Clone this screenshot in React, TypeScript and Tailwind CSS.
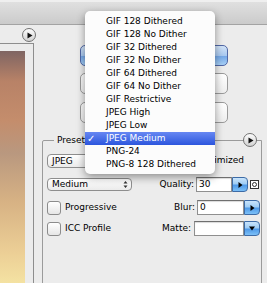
const presets = [
  "GIF 128 Dithered",
  "GIF 128 No Dither",
  "GIF 32 Dithered",
  "GIF 32 No Dither",
  "GIF 64 Dithered",
  "GIF 64 No Dither",
  "GIF Restrictive",
  "JPEG High",
  "JPEG Low",
  "JPEG Medium",
  "PNG-24",
  "PNG-8 128 Dithered",
];

function PlayCircle() {
  return (
    <div className="w-[14px] h-[14px] rounded-full border border-[#727272] bg-gradient-to-b from-[#fdfdfd] to-[#d2d2d2] flex items-center justify-center">
      <svg width="6" height="7" viewBox="0 0 6 7" className="ml-[1px]">
        <path d="M0.5 0.5 L5.5 3.5 L0.5 6.5 Z" fill="#111" />
      </svg>
    </div>
  );
}

function Checkbox() {
  return (
    <div className="w-[14px] h-[14px] rounded-[3px] border border-[#8c8c8c] bg-gradient-to-b from-[#ffffff] to-[#e6e6e6] shrink-0" />
  );
}

function AquaButton({ down }: { down?: boolean }) {
  return (
    <div className="w-[16px] h-[15px] rounded-r-[4px] border border-[#3d6ba6] bg-[linear-gradient(180deg,#c9e4fb_0%,#9fcdf5_45%,#4f9ae8_55%,#7cc0f7_100%)] flex items-center justify-center shrink-0">
      {down ? (
        <svg width="6" height="5" viewBox="0 0 6 5">
          <path d="M0 0.5 L6 0.5 L3 4.5 Z" fill="#000" />
        </svg>
      ) : (
        <svg width="5" height="6" viewBox="0 0 5 6">
          <path d="M0.5 0 L4.5 3 L0.5 6 Z" fill="#000" />
        </svg>
      )}
    </div>
  );
}

function TextField({ value, w }: { value?: string; w: string }) {
  return (
    <div
      className={`${w} h-[15px] bg-white border border-[#8f8f8f] border-t-[#6f6f6f] shadow-[inset_0_1px_1px_rgba(0,0,0,0.15)] pl-[2px] leading-[13px] shrink-0`}
    >
      {value}
    </div>
  );
}

export default function App() {
  return (
    <div className="relative w-[267px] h-[283px] overflow-hidden bg-[#ececec] font-['DejaVu_Sans',sans-serif] text-[9px] text-black">
      <div className="h-[25px] border-t-[2px] border-t-[#efefef] border-b border-b-[#a3a3a3] bg-gradient-to-b from-[#e0e0e0] to-[#cbcbcb]" />

      <div className="flex h-[258px]">
        <div className="w-[42px] shrink-0 flex flex-col">
          <div className="pt-[3px] pl-[22px]">
            <PlayCircle />
          </div>
          <div className="mt-[1px] w-[34px] flex-1 border-t border-r border-[#8e8e8e] pt-[7px] pr-[8px] flex flex-col">
            <div className="flex-1 bg-[linear-gradient(180deg,#7f6563_0%,#b88267_13%,#c48d6c_30%,#b9987f_44%,#d7b284_65%,#eccf96_87%,#f4e2a2_100%)]" />
          </div>
        </div>

        <div className="flex-1 flex flex-col">
          <div className="pt-[20px] pl-[38px] flex flex-col">
            <div className="w-[148px] h-[21px] rounded-[5px] border border-[#5168a6] bg-[linear-gradient(180deg,#d3e4f8_0%,#a9c9f0_50%,#76a9e8_55%,#a7d0f6_100%)]" />
            <div className="mt-[7px] w-[148px] h-[21px] rounded-[5px] border border-[#9a9a9a] bg-gradient-to-b from-[#ffffff] to-[#eeeeee]" />
            <div className="mt-[8px] w-[148px] h-[21px] rounded-[5px] border border-[#9a9a9a] bg-gradient-to-b from-[#ffffff] to-[#eeeeee]" />
          </div>

          <div className="relative mt-[17px] w-[220px] h-[160px] shrink-0 border border-[#9b9b9b] rounded-tl-[2px] pl-[4px] pt-[13px]">
            <span className="absolute -top-[6px] left-[11px] px-[3px] bg-[#ececec] leading-[10px]">
              Preset:
            </span>
            <div className="absolute -top-[8px] right-[4px]">
              <PlayCircle />
            </div>

            <div className="flex items-center h-[14px]">
              <div className="w-[85px] h-[14px] rounded-[4px] border border-[#8e8e8e] bg-gradient-to-b from-[#ffffff] to-[#ebebeb] pl-[4px] leading-[12px]">
                JPEG
              </div>
              <div className="ml-auto mr-[17px] flex items-center gap-[4px]">
                <Checkbox />
                <span>Optimized</span>
              </div>
            </div>

            <div className="mt-[9px] flex items-center h-[15px]">
              <div className="relative w-[85px] h-[13px] rounded-[4px] border border-[#8e8e8e] bg-gradient-to-b from-[#ffffff] to-[#ebebeb] pl-[4px] leading-[11px]">
                Medium
                <svg width="5" height="9" viewBox="0 0 5 9" className="absolute right-[3px] top-[1px]">
                  <path d="M0.5 3.5 L2.5 1 L4.5 3.5 Z M0.5 5.5 L2.5 8 L4.5 5.5 Z" fill="#333" />
                </svg>
              </div>
              <div className="ml-auto mr-[2px] flex items-center">
                <span className="mr-[2px]">Quality:</span>
                <TextField value="30" w="w-[36px]" />
                <AquaButton />
                <div className="ml-[2px] w-[9px] h-[9px] border border-[#333] bg-white flex items-center justify-center">
                  <div className="w-[5px] h-[5px] rounded-full border border-[#333]" />
                </div>
              </div>
            </div>

            <div className="mt-[8px] flex items-center h-[15px]">
              <Checkbox />
              <span className="ml-[4px]">Progressive</span>
              <div className="ml-auto mr-[1px] flex items-center">
                <span className="mr-[2px]">Blur:</span>
                <TextField value="0" w="w-[47px]" />
                <AquaButton />
              </div>
            </div>

            <div className="mt-[6px] flex items-center h-[15px]">
              <Checkbox />
              <span className="ml-[4px]">ICC Profile</span>
              <div className="ml-auto mr-[1px] flex items-center">
                <span className="mr-[3px]">Matte:</span>
                <TextField w="w-[50px]" />
                <AquaButton down />
              </div>
            </div>
          </div>
        </div>
      </div>

      <div className="absolute left-[85px] top-[11px] w-[130px] h-[163px] rounded-[5px] bg-[#fcfcfc] shadow-[0_3px_9px_rgba(0,0,0,0.4)] pt-[4px]">
        {presets.map((p) => {
          const sel = p === "JPEG Medium";
          return (
            <div
              key={p}
              className={`relative h-[13px] leading-[13px] pl-[21px] whitespace-nowrap ${
                sel ? "bg-gradient-to-b from-[#6787f2] to-[#2c55dd] text-white" : ""
              }`}
            >
              {sel && <span className="absolute left-[2px] top-0 text-[10px]">✓</span>}
              {p}
            </div>
          );
        })}
      </div>
    </div>
  );
}
